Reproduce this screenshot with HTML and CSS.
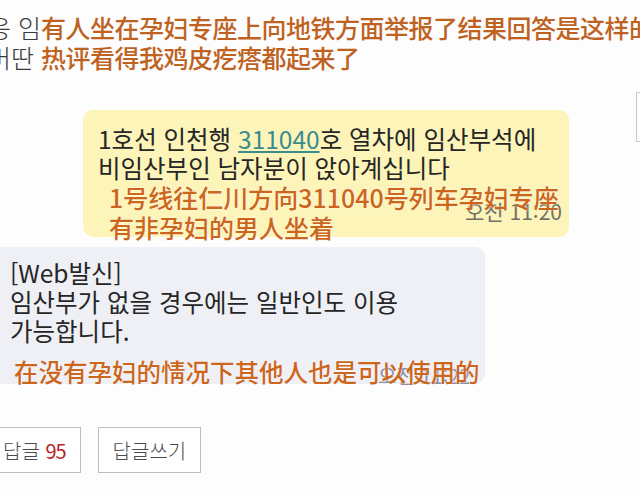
FILE: index.html
```html
<!DOCTYPE html>
<html lang="ko">
<head>
    <meta charset="UTF-8">
    <title>답글</title>
    <link rel="stylesheet" href="styles.css">
</head>
<body>
    <div class="page">
        <div class="head">
            <p class="line"><span class="ko">응 임</span><span class="zh">有人坐在孕妇专座上向地铁方面举报了结果回答是这样的</span></p>
            <p class="line"><span class="ko">버딴</span> <span class="zh">热评看得我鸡皮疙瘩都起来了</span></p>
        </div>
        <div class="edge-box"></div>

        <div class="bubble out">
            <p>1호선 인천행 <a class="num">311040</a>호 열차에 임산부석에</p>
            <p>비임산부인 남자분이 앉아계십니다</p>
            <p class="tr">1号线往仁川方向311040号列车孕妇专座</p>
            <p class="tr">有非孕妇的男人坐着</p>
            <span class="time">오전 11:20</span>
        </div>

        <div class="bubble in">
            <p>[Web발신]</p>
            <p>임산부가 없을 경우에는 일반인도 이용</p>
            <p>가능합니다.</p>
            <p class="tr">在没有孕妇的情况下其他人也是可以使用的</p>
            <span class="time">오전 11:22</span>
        </div>

        <div class="actions">
            <a class="btn">답글&nbsp;<em>95</em></a>
            <a class="btn">답글쓰기</a>
        </div>
    </div>
</body>
</html>
```

FILE: styles.css
```css
*{
    margin: 0px;
    padding: 0px;
    text-decoration: none;
    list-style: none;
}
html, body{
    width: 640px;
    height: 496px;
    overflow: hidden;
    background-color: #fdfdfe;
}
.page{
    position: relative;
    width: 640px;
    height: 496px;
    overflow: hidden;
    font-family: "Noto Sans CJK KR", "Noto Sans CJK SC", sans-serif;
    color: #262626;
}
.head{
    margin-left: -12px;
    padding-top: 12px;
    white-space: nowrap;
}
.head .line{
    font-size: 25px;
    line-height: 30px;
    height: 30px;
}
.head .ko{
    color: #3a3a3a;
    font-weight: 300;
}
.head .zh{
    font-family: "Noto Sans CJK SC", sans-serif;
    color: #c0621f;
    font-weight: 500;
    letter-spacing: -0.5px;
}
.edge-box{
    position: absolute;
    left: 636px;
    top: 92px;
    width: 12px;
    height: 48px;
    border: 1px solid #c8c8c8;
}
.bubble{
    position: relative;
    border-radius: 10px;
}
.bubble p{
    font-size: 24.5px;
    line-height: 29px;
    white-space: nowrap;
}
.bubble .tr{
    font-family: "Noto Sans CJK SC", sans-serif;
    color: #cc661c;
    font-weight: 500;
    font-size: 25px;
    line-height: 30px;
    position: relative;
    z-index: 2;
    text-shadow: 0 0 2px #fff;
}
.bubble .time{
    position: absolute;
    font-size: 21px;
    color: #707068;
    z-index: 1;
}
.out{
    margin: 38px 0 0 83px;
    width: 471px;
    height: 113px;
    padding: 14px 0 0 15px;
    background-color: #fcf4b9;
}
.out .num{
    color: #3b8c8e;
    text-decoration: underline;
}
.out .tr{
    padding-left: 11px;
}
.out .time{
    left: 382px;
    top: 86px;
}
.in{
    margin: 10px 0 0 -10px;
    width: 475px;
    height: 126px;
    padding: 11px 0 0 20px;
    background-color: #eef0f6;
}
.in .tr{
    margin-top: 12px;
    padding-left: 4px;
    font-size: 24.5px;
}
.in .time{
    left: 388px;
    top: 114px;
    color: #8a8aa6;
    font-size: 20px;
}
.actions{
    display: flex;
    gap: 17px;
    margin: 43px 0 0 -12px;
}
.btn{
    display: flex;
    align-items: center;
    justify-content: center;
    height: 44px;
    padding: 0 14px;
    border: 1px solid #bdbdbd;
    background-color: #fff;
    font-size: 20px;
    color: #4a4a4a;
    font-weight: 300;
}
.btn em{
    font-style: normal;
    color: #b5242c;
    font-weight: 400;
    letter-spacing: -1px;
}
```
